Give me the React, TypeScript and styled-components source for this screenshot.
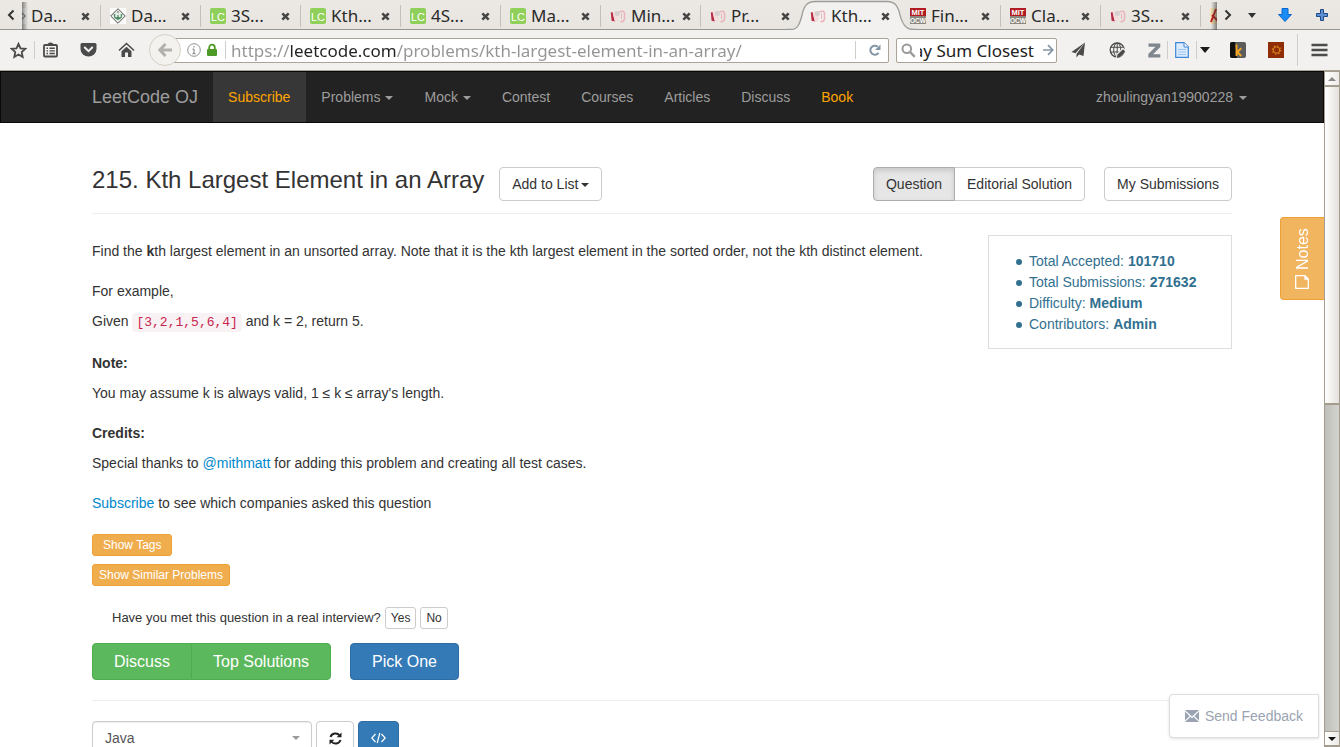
import React from 'react';
import styled, { createGlobalStyle, css } from 'styled-components';

const sans = '"Liberation Sans", Arial, sans-serif';
const chrome = '"Noto Sans", "Open Sans", sans-serif';

const GlobalStyle = createGlobalStyle`
  *, *::before, *::after { box-sizing: border-box; }
  html, body, #root { height: 100%; }
  body { margin: 0; background: #fff; overflow: hidden; }
  button, input, select { font: inherit; color: inherit; margin: 0; }
  button { cursor: pointer; }
  a { text-decoration: none; }
`;

const Window = styled.div`
  display: flex;
  flex-direction: column;
  height: 100vh;
  font-family: ${sans};
  font-size: 14px;
  line-height: 20px;
  color: #333;
`;

/* ---------- tab strip ---------- */

const TabStrip = styled.div`
  display: flex;
  flex: none;
  height: 30px;
  background: linear-gradient(#ece9e5, #e8e5e0);
  box-shadow: inset 0 -1px #979791;
  font-family: ${chrome};
  font-size: 17px;
  color: #2a2a2a;
`;

const StripButton = styled.button<{ $width: number }>`
  display: flex;
  flex: none;
  align-items: center;
  justify-content: center;
  width: ${(p) => p.$width}px;
  padding: 0;
  border: 0;
  background: none;
`;

const TabList = styled.div`
  position: relative;
  display: flex;
  flex: 1;
  min-width: 0;
  overflow: hidden;

  &::before,
  &::after {
    content: '';
    position: absolute;
    z-index: 3;
    top: 2px;
    bottom: 0;
    left: 0;
    width: 6px;
    background: linear-gradient(90deg, rgba(60, 60, 60, 0.6), transparent);
  }
  &::after {
    left: auto;
    right: 0;
    background: linear-gradient(270deg, rgba(60, 60, 60, 0.6), transparent);
  }
`;

const TabItem = styled.div<{ $active?: boolean; $divider?: boolean }>`
  position: relative;
  display: flex;
  flex: none;
  align-items: center;
  gap: 5px;
  width: 100px;
  height: 30px;
  padding: 2px 8px 0 9px;
  z-index: ${(p) => (p.$active ? 2 : 1)};
  border-left: 1px solid transparent;
  background: ${(p) =>
    p.$divider ? 'linear-gradient(#c3c0bb, #c3c0bb) 0 5px / 1px 22px no-repeat border-box' : 'none'};

  &:first-child {
    margin-left: -22px;
  }
`;

const TabShape = styled.svg`
  position: absolute;
  left: -14px;
  top: 0;
  z-index: -1;
`;

const TabTitle = styled.span`
  flex: 1;
  white-space: nowrap;
`;

const CloseButton = styled.button`
  display: flex;
  padding: 2px;
  border: 0;
  background: none;
`;

/* ---------- toolbar ---------- */

const Toolbar = styled.div`
  display: flex;
  flex: none;
  align-items: center;
  height: 41px;
  padding-left: 3px;
  border-bottom: 1px solid #aaa496;
  background: #f2f1ef;
  font-family: ${chrome};
  font-size: 17px;
`;

const ToolButton = styled.button<{ $width: number; $gap?: number }>`
  display: flex;
  flex: none;
  align-items: center;
  justify-content: center;
  width: ${(p) => p.$width}px;
  height: 32px;
  margin-left: ${(p) => p.$gap ?? 0}px;
  padding: 0;
  border: 0;
  background: none;
`;

const ToolDivider = styled.span<{ $gap?: number; $tall?: boolean }>`
  flex: none;
  width: 1px;
  height: ${(p) => (p.$tall ? 32 : 18)}px;
  margin-left: ${(p) => p.$gap ?? 0}px;
  background: #d0cdc8;
`;

const BackButton = styled.button`
  display: flex;
  flex: none;
  align-items: center;
  justify-content: center;
  z-index: 1;
  width: 32px;
  height: 32px;
  margin-left: 7px;
  padding: 0;
  border: 1px solid #d6d1c6;
  border-radius: 50%;
  background: #f3f2ef;
`;

const Field = styled.div<{ $url?: boolean }>`
  display: flex;
  align-items: center;
  height: 25px;
  border: 1px solid #aba395;
  border-radius: 2px;
  background: #fff;
  ${(p) =>
    p.$url
      ? css`
          flex: 1;
          min-width: 0;
          margin-left: -14px;
          padding-left: 19px;
          gap: 5px;
        `
      : css`
          flex: none;
          width: 161px;
          margin-left: 7px;
          padding: 0 2px 0 4px;
          gap: 4px;
        `}
`;

const UrlInput = styled.input`
  flex: 1;
  min-width: 0;
  height: 23px;
  padding: 0;
  border: 0;
  outline: 0;
  color: #333;
  background: linear-gradient(90deg, #949494 59px, #222 59px 165px, #949494 165px);
  background-clip: text;
  -webkit-background-clip: text;
  -webkit-text-fill-color: transparent;
`;

const SearchInput = styled.input`
  flex: 1;
  min-width: 0;
  height: 23px;
  margin-right: 5px;
  padding: 0;
  border: 0;
  outline: 0;
  background: none;
  color: #222;
  direction: rtl;
`;

/* ---------- page ---------- */

const Viewport = styled.div`
  display: flex;
  flex: 1;
  min-height: 0;
`;

const Page = styled.div`
  position: relative;
  flex: 1;
  min-width: 0;
  overflow: hidden;
  background: #fff;
`;

const Navbar = styled.nav`
  border: 1px solid #080808;
  background: #222;
`;

const Container = styled.div`
  max-width: 1140px;
  margin: 0 auto;
`;

const NavRow = styled(Container)`
  display: flex;
  height: 50px;
`;

const Brand = styled.a`
  padding: 15px 15px 15px 0;
  font-size: 18px;
  color: #9d9d9d;
  white-space: nowrap;
`;

const NavLink = styled.a<{ $accent?: boolean; $active?: boolean; $end?: boolean }>`
  padding: 15px 16px 15px 15px;
  margin-left: ${(p) => (p.$end ? 'auto' : 0)};
  margin-right: ${(p) => (p.$end ? -31 : 0)}px;
  white-space: nowrap;
  color: ${(p) => (p.$accent ? '#ffa500' : '#9d9d9d')};
  background: ${(p) => (p.$active ? '#373737' : 'none')};
`;

const Caret = styled.span<{ $gap: number }>`
  display: inline-block;
  margin-left: ${(p) => p.$gap}px;
  vertical-align: middle;
  border: 4px solid transparent;
  border-top-color: currentColor;
  border-bottom: 0;
`;

const TitleRow = styled.header`
  display: flex;
  align-items: center;
  margin-top: 44px;
  padding-bottom: 12px;
  border-bottom: 1px solid #eee;
`;

const Title = styled.h1`
  margin: 0 15px 8px 0;
  font-size: 24px;
  line-height: 26px;
  font-weight: 400;
  white-space: nowrap;
`;

const Button = styled.button<{ $active?: boolean }>`
  height: 34px;
  padding: 0 12px;
  border: 1px solid #ccc;
  border-radius: 4px;
  background: #fff;
  white-space: nowrap;
  ${(p) =>
    p.$active &&
    css`
      border-color: #adadad;
      background: #e6e6e6;
      box-shadow: inset 0 3px 5px rgba(0, 0, 0, 0.125);
      z-index: 1;
    `}
`;

const ButtonGroup = styled.div`
  display: flex;
  margin: 0 19px 0 auto;

  & > button:first-child {
    border-top-right-radius: 0;
    border-bottom-right-radius: 0;
  }
  & > button + button {
    margin-left: -1px;
    border-top-left-radius: 0;
    border-bottom-left-radius: 0;
  }
`;

const Body = styled.main`
  display: flex;
  justify-content: space-between;
  align-items: flex-start;
  margin-top: 21px;
`;

const Description = styled.div`
  display: flex;
  flex-direction: column;
  gap: 20px;
  padding-top: 6px;
`;

const Section = styled.section`
  display: flex;
  flex-direction: column;
  gap: 10px;
`;

const Text = styled.p`
  margin: 0;
`;

const Link = styled.a`
  color: #0088cc;
`;

const Code = styled.code`
  padding: 2px 4px;
  border-radius: 4px;
  background: #f9f2f4;
  font-family: "Liberation Mono", monospace;
  font-size: 13px;
  color: #c7254e;
`;

const Stats = styled.ul`
  flex: none;
  width: 244px;
  margin: 0;
  padding: 15px 0 13px 40px;
  border: 1px solid #ddd;
  color: #31708f;
  line-height: 21px;
  list-style: none;
`;

const Stat = styled.li`
  display: flex;
  align-items: center;
  gap: 4px;

  &::before {
    content: '';
    width: 6px;
    height: 6px;
    margin: 0 3px 0 -13px;
    border-radius: 50%;
    background: currentColor;
  }
`;

const Extras = styled.div`
  display: flex;
  flex-direction: column;
  align-items: flex-start;
  gap: 8px;
  margin-top: 21px;
`;

const SmallButton = styled.button<{ $warn?: boolean; $wide?: boolean }>`
  height: 22px;
  padding: 0 ${(p) => (p.$wide ? 10 : p.$warn ? 6 : 5)}px;
  border: 1px solid ${(p) => (p.$warn ? '#eea236' : '#ccc')};
  border-radius: 3px;
  background: ${(p) => (p.$warn ? '#f0ad4e' : '#fff')};
  color: ${(p) => (p.$warn ? '#fff' : '#333')};
  font-size: 12px;
  line-height: 18px;
  white-space: nowrap;
`;

const Survey = styled.div`
  display: flex;
  align-items: center;
  gap: 4px;
  margin: 21px 0 14px;
  padding-left: 20px;
  font-size: 13px;
`;

const Actions = styled.div`
  display: flex;
  padding-bottom: 20px;
  border-bottom: 1px solid #eee;
`;

const BigButton = styled.button<{ $tone: 'green' | 'blue'; $side?: 'left' | 'right' }>`
  height: 37px;
  padding: 0 21px;
  border: 1px solid ${(p) => (p.$tone === 'green' ? '#4cae4c' : '#2e6da4')};
  border-radius: ${(p) =>
    p.$side === 'left' ? '4px 0 0 4px' : p.$side === 'right' ? '0 4px 4px 0' : '4px'};
  margin-left: ${(p) => (p.$side === 'left' ? 0 : p.$side === 'right' ? -1 : 19)}px;
  background: ${(p) => (p.$tone === 'green' ? '#5cb85c' : '#337ab7')};
  color: #fff;
  font-size: 16px;
  white-space: nowrap;
`;

const EditorBar = styled.div`
  display: flex;
  gap: 4px;
  margin-top: 20px;
`;

const Language = styled.div`
  display: grid;
  align-items: center;
  width: 220px;

  & > * {
    grid-area: 1 / 1;
  }
  & > span {
    justify-self: end;
    margin-right: 12px;
    color: #999;
    pointer-events: none;
  }
`;

const LanguageSelect = styled.select`
  appearance: none;
  height: 34px;
  padding: 0 12px;
  border: 1px solid #ccc;
  border-radius: 4px;
  background: #fff;
  box-shadow: inset 0 1px 1px rgba(0, 0, 0, 0.075);
  color: #555;
`;

const IconButton = styled.button<{ $primary?: boolean }>`
  display: flex;
  align-items: center;
  justify-content: center;
  width: ${(p) => (p.$primary ? 41 : 38)}px;
  height: 34px;
  padding: 0;
  border: 1px solid ${(p) => (p.$primary ? '#2e6da4' : '#ccc')};
  border-radius: 4px;
  background: ${(p) => (p.$primary ? '#337ab7' : '#fff')};
`;

const NotesTab = styled.button`
  position: absolute;
  top: 146px;
  right: 0;
  display: flex;
  align-items: center;
  gap: 5px;
  width: 44px;
  height: 83px;
  padding: 10px 0;
  border: 1px solid #eea236;
  border-left: 0;
  border-radius: 0 4px 4px 0;
  background: #f1b45f;
  color: #fff;
  font-size: 16px;
  writing-mode: vertical-rl;
  transform: rotate(180deg);
  justify-content: flex-start;
  line-height: 42px;
`;

const Feedback = styled.button`
  position: absolute;
  right: 5px;
  bottom: 9px;
  display: flex;
  align-items: center;
  gap: 6px;
  height: 44px;
  padding: 0 15px;
  border: 1px solid #ddd;
  border-radius: 4px 0 0 4px;
  background: #fff;
  box-shadow: 0 1px 3px rgba(0, 0, 0, 0.12);
  color: #9aa3b2;
`;

/* ---------- scroll bar ---------- */

const ScrollBar = styled.div`
  display: flex;
  flex: none;
  flex-direction: column;
  width: 16px;
  border: 1px solid #a39c8f;
  border-width: 0 1px;
  background: linear-gradient(90deg, #bfbfba, #d3d3cf);
`;

const ScrollButton = styled.button`
  display: flex;
  flex: none;
  align-items: center;
  justify-content: center;
  height: 16px;
  padding: 0;
  border: 1px solid #a39c8f;
  border-width: 1px 0 2px;
  background: linear-gradient(90deg, #fff, #eceae6);
`;

const ScrollThumb = styled.div`
  flex: 0 0 47%;
  border-bottom: 2px solid #a39c8f;
  background: linear-gradient(90deg, #fff, #e4e1dc);
`;

const ScrollTrack = styled.div`
  flex: 1;
`;

/* ---------- icons ---------- */

type SiteKind = 'owl' | 'lc' | 'bag' | 'mit' | 'pen';

const SiteIcon = ({ kind }: { kind: SiteKind }) => (
  <svg width="16" height="16" viewBox="0 0 16 16" style={{ flex: 'none' }} aria-hidden="true">
    {kind === 'owl' && (
      <g>
        <rect width="16" height="16" fill="#fbfbfa" />
        <path d="M8 .7 15.3 8 8 15.3.7 8Z" fill="#e6ece6" stroke="#555" />
        <path d="M3.500 5.500 6 7h4L12.500 5.500 11.600 10 8 12 4.400 10Z" fill="#4b8a63" />
        <circle cx="6.300" cy="8" r="1.200" fill="#e9f2ea" />
        <circle cx="9.700" cy="8" r="1.200" fill="#e9f2ea" />
        <path d="M8 3v2" stroke="#666" />
      </g>
    )}
    {kind === 'lc' && (
      <g>
        <rect width="16" height="16" rx="2" fill="#8fd05a" />
        <text x="8" y="12.500" textAnchor="middle" fontFamily="Liberation Sans" fontSize="11" fill="#fff">LC</text>
      </g>
    )}
    {kind === 'bag' && (
      <g>
        <path d="M.8 4.500 3 4l.8 4.500L5 13.500l-3.400-.8Z" fill="#b92b45" />
        <path d="M2.500 4C5 2.600 8 3 9 4.500L8.500 13 5 14 3.600 9Z" fill="#f3dcdc" />
        <circle cx="7.300" cy="5.600" r="2.500" fill="#d5d0cd" />
        <path d="M9.500 4c2.500-1.500 5-.8 5 1.500v5c0 2-1.500 3.500-4 3" fill="none" stroke="#ebb4ba" strokeWidth="1.600" />
        <path d="M11.500 5.500v5.500" stroke="#ebb4ba" />
      </g>
    )}
    {kind === 'mit' && (
      <g>
        <rect width="16" height="8" fill="#b01c22" />
        <rect y="8" width="16" height="8" fill="#8b877c" />
        <text x="8" y="7" textAnchor="middle" fontFamily="Liberation Sans" fontWeight="700" fontSize="7.500" fill="#fff">MIT</text>
        <text x="8" y="15" textAnchor="middle" fontFamily="Liberation Sans" fontWeight="700" fontSize="6.500" fill="#fff">OCW</text>
      </g>
    )}
    {kind === 'pen' && (
      <g>
        <rect width="16" height="16" fill="#f3dfb0" />
        <path d="M1 14 6 1M2 7l6 6" stroke="#c11c1c" strokeWidth="2" />
      </g>
    )}
  </svg>
);

const CloseIcon = () => (
  <svg width="9" height="9" viewBox="0 0 9 9" aria-hidden="true">
    <path d="M1.300 1.300 7.700 7.700M7.700 1.300 1.300 7.700" stroke="#444" strokeWidth="2.500" />
  </svg>
);

const ActiveShape = () => (
  <TabShape width="130" height="30" viewBox="-14 0 130 30" aria-hidden="true">
    <path
      d="M-14 29.500H-10C-3 29.500-1 23 1 15 3 6 6 1.500 14 1.500H86C94 1.500 97 6 99 15 101 23 104 29.500 112 29.500H116V30H-14Z"
      fill="#f2f1ef"
    />
    <path
      d="M-14 29.500H-10C-3 29.500-1 23 1 15 3 6 6 1.500 14 1.500H86C94 1.500 97 6 99 15 101 23 104 29.500 112 29.500H116"
      fill="none"
      stroke="#9d9d99"
      strokeWidth="1.300"
    />
  </TabShape>
);

const glyph = '#4b4b4b';

const StarIcon = () => (
  <svg width="17" height="17" viewBox="0 0 17 17">
    <path d="m8.500 1.800 2 4.500 4.800.5-3.600 3.300 1 4.900-4.200-2.500L4.300 15l1-4.900L1.700 6.800l4.800-.5Z" fill="none" stroke={glyph} strokeWidth="1.800" />
  </svg>
);
const ListIcon = () => (
  <svg width="15" height="16" viewBox="0 0 15 16">
    <rect x="1" y="3" width="13" height="11.500" rx="1" fill="none" stroke={glyph} strokeWidth="1.800" />
    <path d="M4.500 3a3 2.500 0 0 1 6 0Z" fill={glyph} />
    <path d="M3.500 6.300h1.500M3.500 8.900h1.500M3.500 11.500h1.500M6.500 6.300h5.300M6.500 8.900h5.300M6.500 11.500h5.300" stroke={glyph} strokeWidth="1.400" />
  </svg>
);
const PocketIcon = () => (
  <svg width="17" height="16" viewBox="0 0 17 16">
    <path d="M2 1h13q1.500 0 1.500 1.500V7a8 7.500 0 0 1-16 0V2.500Q.5 1 2 1Z" fill={glyph} />
    <path d="m4.800 5.500 3.700 3.700 3.700-3.700" fill="none" stroke="#f2f1ef" strokeWidth="2" strokeLinecap="round" />
  </svg>
);
const HomeIcon = () => (
  <svg width="17" height="16" viewBox="0 0 17 16">
    <path d="M1 8.500 8.500 1.500 16 8.500" fill="none" stroke={glyph} strokeWidth="1.600" />
    <path d="M3.500 9.300 8.500 4.800l5 4.500V15H10v-4.500H7V15H3.500Z" fill={glyph} />
  </svg>
);
const BackIcon = () => (
  <svg width="15" height="14" viewBox="0 0 15 14">
    <path d="M7.500 1 1.800 7l5.700 6M2.500 7H14" fill="none" stroke="#b3b1ad" strokeWidth="3" />
  </svg>
);
const InfoIcon = () => (
  <svg width="14" height="14" viewBox="0 0 14 14">
    <circle cx="7" cy="7" r="6.300" fill="none" stroke="#909090" />
    <path d="M7 3v1.500M7 6v5M5.500 6.200H7M5.500 10.700h3" stroke="#909090" strokeWidth="1.200" />
  </svg>
);
const LockIcon = () => (
  <svg width="12" height="14" viewBox="0 0 12 14">
    <path d="M3.200 7V4.500a2.800 2.800 0 0 1 5.600 0V7" fill="none" stroke="#4e9a26" strokeWidth="1.800" />
    <rect x="1" y="6" width="10" height="7" rx="1" fill="#4e9a26" />
  </svg>
);
const ReloadIcon = () => (
  <svg width="12" height="12" viewBox="0 0 12 12">
    <path d="M9.500 8.800A4.500 4.500 0 1 1 8.800 2.800" fill="none" stroke="#8496a6" strokeWidth="2" />
    <path d="M11.500.5V6H6Z" fill="#8496a6" />
  </svg>
);
const SearchIcon = () => (
  <svg width="15" height="15" viewBox="0 0 15 15" style={{ flex: 'none' }}>
    <circle cx="5.800" cy="5.800" r="4.300" fill="none" stroke="#999" strokeWidth="2" />
    <path d="m9 9 4.800 4.800" stroke="#999" strokeWidth="2.400" />
  </svg>
);
const GoIcon = () => (
  <svg width="11" height="12" viewBox="0 0 11 12" style={{ flex: 'none' }}>
    <path d="M0 6h9M5 1.200 9.700 6 5 10.800" fill="none" stroke="#8496a6" strokeWidth="1.700" />
  </svg>
);
const SendIcon = () => (
  <svg width="15" height="16" viewBox="0 0 15 16">
    <path d="M14 .5.500 10 4.500 11.200Z M14 .5 5.500 12v3.500l2.500-3L12.500 14Z" fill={glyph} />
  </svg>
);
const GlobeIcon = () => (
  <svg width="17" height="17" viewBox="0 0 17 17">
    <circle cx="8.200" cy="8" r="7" fill="none" stroke={glyph} strokeWidth="1.300" />
    <ellipse cx="8.200" cy="8" rx="3.500" ry="7" fill="none" stroke={glyph} />
    <path d="M1.500 5.300h13.500M1.200 10h13.500M8.200 1v14" stroke={glyph} />
    <path d="m6.500 16.500 1.500-5L14 5.500 17 8.500 11 15Z" fill="#f2f1ef" />
    <path d="m7.800 15.900.8-3.400L14 7.200l2.200 2.200L11 14.900Z" fill={glyph} />
  </svg>
);
const ZIcon = () => (
  <svg width="13" height="15" viewBox="0 0 13 15">
    <path d="M.5.500H12.300V4L5 11.300H12.300V14.500H.3V11L7.600 3.700H.5Z" fill="#7f868e" />
  </svg>
);
const PageIcon = () => (
  <svg width="14" height="16" viewBox="0 0 14 16">
    <path d="M.7.700H9L13.300 5V15.300H.7Z" fill="#dcecfd" stroke="#3f86d8" strokeWidth="1.200" />
    <path d="M9 .7V5h4.300" fill="#fff" stroke="#3f86d8" />
    <path d="M3 7.500h8M3 10h8M3 12.500h8" stroke="#9cc5f2" />
  </svg>
);
const DownTriangle = ({ size = 10, color = '#1b1b1b' }: { size?: number; color?: string }) => (
  <svg width={size} height={size / 2 + 1} viewBox="0 0 10 6">
    <path d="M0 0h10L5 6Z" fill={color} />
  </svg>
);
const KIcon = () => (
  <svg width="16" height="16" viewBox="0 0 16 16">
    <rect width="16" height="16" rx="2" fill="#5c5c5c" />
    <path d="M0 2q0-2 2-2h3L7 16H2q-2 0-2-2Z" fill="#111" />
    <path d="M6.500 2.500v11.500M11.300 6.200 7.300 10l4 4" fill="none" stroke="#f5a623" strokeWidth="1.900" />
  </svg>
);
const GearIcon = () => (
  <svg width="16" height="16" viewBox="0 0 16 16">
    <rect width="16" height="16" fill="#8f2d08" />
    <circle cx="8.500" cy="8" r="3.200" fill="none" stroke="#e08a1c" />
    <circle cx="8.500" cy="8" r="4.200" fill="none" stroke="#e08a1c" strokeWidth="1.200" strokeDasharray="1.300 2" />
  </svg>
);
const MenuIcon = () => (
  <svg width="17" height="14" viewBox="0 0 17 14">
    <path d="M.5 2h16M.5 7h16M.5 12h16" stroke="#4a4d4a" strokeWidth="2.600" />
  </svg>
);
const RefreshIcon = () => (
  <svg width="13" height="13" viewBox="0 0 13 13">
    <path d="M1.500 5A5.200 5 0 0 1 10.700 3.500M11.500 8A5.200 5 0 0 1 2.300 9.500" fill="none" stroke="#222" strokeWidth="2" />
    <path d="M12.500.5V5.300H7.700ZM.5 12.500V7.700H5.300Z" fill="#222" />
  </svg>
);
const CodeIcon = () => (
  <svg width="15" height="12" viewBox="0 0 15 12">
    <path d="M4.500 2 .8 6l3.700 4M10.500 2l3.700 4-3.700 4M8.800 1 6.200 11" fill="none" stroke="#fff" strokeWidth="1.200" />
  </svg>
);
const NoteIcon = () => (
  <svg width="14" height="14" viewBox="0 0 14 14">
    <path d="M.7.700h12.600v12.600H4L.7 10ZM.7 10H4v3.300" fill="none" stroke="#fff" strokeWidth="1.300" />
  </svg>
);
const MailIcon = () => (
  <svg width="14" height="12" viewBox="0 0 14 12">
    <path d="M0 0h14L7 6.500ZM0 1.500 4.600 6 0 10.500ZM14 1.500 9.400 6l4.600 4.500ZM5.500 6.800 7 8.200l1.500-1.400L14 12H0Z" fill="#9aa3b2" />
  </svg>
);

/* ---------- data ---------- */

const tabs: { title: string; icon: SiteKind; active?: boolean; divider?: boolean }[] = [
  { title: 'Da...', icon: 'owl' },
  { title: 'Da...', icon: 'owl', divider: true },
  { title: '3S...', icon: 'lc', divider: true },
  { title: 'Kth...', icon: 'lc', divider: true },
  { title: '4S...', icon: 'lc', divider: true },
  { title: 'Ma...', icon: 'lc', divider: true },
  { title: 'Min...', icon: 'bag', divider: true },
  { title: 'Pr...', icon: 'bag', divider: true },
  { title: 'Kth...', icon: 'bag', active: true },
  { title: 'Fin...', icon: 'mit' },
  { title: 'Cla...', icon: 'mit', divider: true },
  { title: '3S...', icon: 'bag', divider: true },
  { title: '', icon: 'pen', divider: true },
];

const navLinks: { label: string; menu?: boolean; accent?: boolean; active?: boolean }[] = [
  { label: 'Subscribe', accent: true, active: true },
  { label: 'Problems', menu: true },
  { label: 'Mock', menu: true },
  { label: 'Contest' },
  { label: 'Courses' },
  { label: 'Articles' },
  { label: 'Discuss' },
  { label: 'Book', accent: true },
];

const stats = [
  ['Total Accepted:', '101710'],
  ['Total Submissions:', '271632'],
  ['Difficulty:', 'Medium'],
  ['Contributors:', 'Admin'],
];

export default function App() {
  return (
    <Window>
      <GlobalStyle />
      <TabStrip>
        <StripButton $width={22} aria-label="Scroll tabs left">
          <svg width="8" height="12" viewBox="0 0 8 12"><path d="M6.500 1.500 2 6l4.500 4.500" fill="none" stroke="#333" strokeWidth="2" /></svg>
        </StripButton>
        <TabList>
          {tabs.map((tab, i) => (
            <TabItem key={i} $active={tab.active} $divider={tab.divider}>
              {tab.active && <ActiveShape />}
              <SiteIcon kind={tab.icon} />
              <TabTitle>{tab.title}</TabTitle>
              <CloseButton aria-label="Close tab"><CloseIcon /></CloseButton>
            </TabItem>
          ))}
        </TabList>
        <StripButton $width={21} aria-label="Scroll tabs right">
          <svg width="8" height="12" viewBox="0 0 8 12"><path d="M1.500 1.500 6 6l-4.500 4.500" fill="none" stroke="#333" strokeWidth="2" /></svg>
        </StripButton>
        <StripButton $width={27} aria-label="List all tabs"><DownTriangle size={8} color="#333" /></StripButton>
        <StripButton $width={39} aria-label="Downloads">
          <svg width="14" height="14" viewBox="0 0 14 14"><path d="M4 .5h6V6.500h3.500L7 13.500.5 6.500H4Z" fill="#1b8cf5" stroke="#0a68cf" /></svg>
        </StripButton>
        <StripButton $width={36} aria-label="New tab">
          <svg width="12" height="12" viewBox="0 0 12 12"><path d="M4.500.5h3v4h4v3h-4v4h-3v-4h-4v-3h4Z" fill="#5b8fd6" stroke="#204a87" /></svg>
        </StripButton>
      </TabStrip>

      <Toolbar>
        <ToolButton $width={31} aria-label="Bookmark"><StarIcon /></ToolButton>
        <ToolDivider />
        <ToolButton $width={31} aria-label="Bookmarks list"><ListIcon /></ToolButton>
        <ToolButton $width={44} aria-label="Pocket"><PocketIcon /></ToolButton>
        <ToolButton $width={32} aria-label="Home"><HomeIcon /></ToolButton>
        <BackButton aria-label="Back"><BackIcon /></BackButton>
        <Field $url>
          <InfoIcon />
          <LockIcon />
          <ToolDivider $gap={2} />
          <UrlInput aria-label="Address" defaultValue="https://leetcode.com/problems/kth-largest-element-in-an-array/" />
          <ToolDivider />
          <ToolButton $width={27} aria-label="Reload"><ReloadIcon /></ToolButton>
        </Field>
        <Field>
          <SearchIcon />
          <SearchInput aria-label="Search" defaultValue="Array Sum Closest" />
          <GoIcon />
        </Field>
        <ToolButton $width={42} aria-label="Send page"><SendIcon /></ToolButton>
        <ToolButton $width={36} aria-label="Annotate"><GlobeIcon /></ToolButton>
        <ToolButton $width={26} $gap={6} aria-label="Zotero"><ZIcon /></ToolButton>
        <ToolDivider />
        <ToolButton $width={28} aria-label="Save page"><PageIcon /></ToolButton>
        <ToolDivider />
        <ToolButton $width={16} aria-label="Save options"><DownTriangle /></ToolButton>
        <ToolButton $width={50} aria-label="Keyboard add-on"><KIcon /></ToolButton>
        <ToolButton $width={26} aria-label="Settings add-on"><GearIcon /></ToolButton>
        <ToolDivider $gap={8} $tall />
        <ToolButton $width={42} aria-label="Open menu"><MenuIcon /></ToolButton>
      </Toolbar>

      <Viewport>
        <Page>
          <Navbar>
            <NavRow>
              <Brand href="#">LeetCode OJ</Brand>
              {navLinks.map((l) => (
                <NavLink key={l.label} href="#" $accent={l.accent} $active={l.active}>
                  {l.label}
                  {l.menu && <Caret $gap={5} />}
                </NavLink>
              ))}
              <NavLink href="#" $end>
                zhoulingyan19900228
                <Caret $gap={6} />
              </NavLink>
            </NavRow>
          </Navbar>

          <Container>
            <TitleRow>
              <Title>215. Kth Largest Element in an Array</Title>
              <Button>
                Add to List
                <Caret $gap={3} />
              </Button>
              <ButtonGroup>
                <Button $active>Question</Button>
                <Button>Editorial Solution</Button>
              </ButtonGroup>
              <Button>My Submissions</Button>
            </TitleRow>

            <Body>
              <Description>
                <Text>
                  Find the <b>k</b>th largest element in an unsorted array. Note that it is the kth largest element in the
                  sorted order, not the kth distinct element.
                </Text>
                <Section>
                  <Text>For example,</Text>
                  <Text>
                    Given <Code>[3,2,1,5,6,4]</Code> and k = 2, return 5.
                  </Text>
                </Section>
                <Section>
                  <Text><b>Note:</b></Text>
                  <Text>You may assume k is always valid, 1 ≤ k ≤ array's length.</Text>
                </Section>
                <Section>
                  <Text><b>Credits:</b></Text>
                  <Text>
                    Special thanks to <Link href="#">@mithmatt</Link> for adding this problem and creating all test cases.
                  </Text>
                </Section>
                <Text>
                  <Link href="#">Subscribe</Link> to see which companies asked this question
                </Text>
              </Description>
              <Stats>
                {stats.map(([label, value]) => (
                  <Stat key={label}>
                    {label} <b>{value}</b>
                  </Stat>
                ))}
              </Stats>
            </Body>

            <Extras>
              <SmallButton $warn $wide>Show Tags</SmallButton>
              <SmallButton $warn>Show Similar Problems</SmallButton>
            </Extras>

            <Survey>
              Have you met this question in a real interview?
              <SmallButton>Yes</SmallButton>
              <SmallButton>No</SmallButton>
            </Survey>

            <Actions>
              <BigButton $tone="green" $side="left">Discuss</BigButton>
              <BigButton $tone="green" $side="right">Top Solutions</BigButton>
              <BigButton $tone="blue">Pick One</BigButton>
            </Actions>

            <EditorBar>
              <Language>
                <LanguageSelect aria-label="Language" defaultValue="Java">
                  <option>Java</option>
                  <option>C++</option>
                  <option>Python</option>
                </LanguageSelect>
                <Caret $gap={0} />
              </Language>
              <IconButton aria-label="Reset code"><RefreshIcon /></IconButton>
              <IconButton $primary aria-label="Editor settings"><CodeIcon /></IconButton>
            </EditorBar>
          </Container>

          <NotesTab>
            <NoteIcon />
            Notes
          </NotesTab>
          <Feedback>
            <MailIcon />
            Send Feedback
          </Feedback>
        </Page>

        <ScrollBar>
          <ScrollButton aria-label="Scroll up"><svg width="8" height="4" viewBox="0 0 8 4"><path d="M4 0 8 4H0Z" fill="#888" /></svg></ScrollButton>
          <ScrollThumb />
          <ScrollTrack />
          <ScrollButton aria-label="Scroll down"><svg width="8" height="4" viewBox="0 0 8 4"><path d="M4 4 8 0H0Z" fill="#111" /></svg></ScrollButton>
        </ScrollBar>
      </Viewport>
    </Window>
  );
}
